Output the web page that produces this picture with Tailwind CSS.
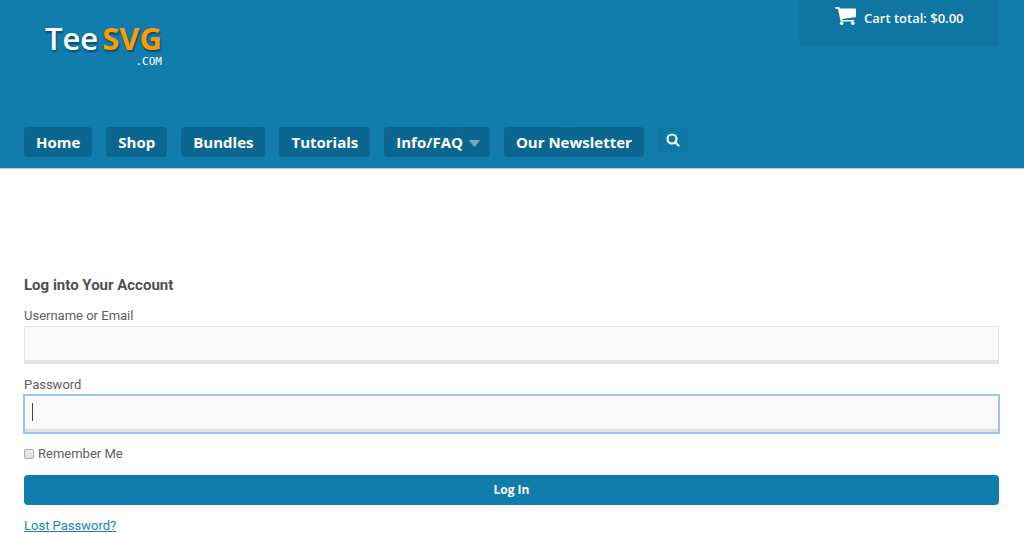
<!DOCTYPE html>
<html lang="en">
<head>
<meta charset="utf-8">
<meta name="viewport" content="width=device-width, initial-scale=1">
<title>TeeSVG.com – Log In</title>
<script src="https://cdn.jsdelivr.net/npm/@tailwindcss/browser@4"></script>
</head>
<body class="bg-white font-['Roboto',sans-serif] text-[13px] text-[#5e5e5e]">
<header class="border-b border-[#a9d3e6] bg-[#117dad] px-6 font-['Open_Sans',sans-serif] text-white">
  <div class="flex h-[113px] items-start justify-between">
    <a href="#" class="ml-[21px] mt-5 flex flex-col items-end" aria-label="TeeSVG.com">
      <span class="flex gap-1 text-[31px] font-bold leading-9 [text-shadow:1px_2px_2px_#0a4a6a]"><span class="font-semibold">Tee</span><span class="text-[#ff9a00]">SVG</span></span>
      <span class="font-['DejaVu_Sans_Mono',monospace] text-[11px] leading-3">.COM</span>
    </a>
    <a href="#" class="mr-px flex h-[46px] w-[200px] items-start gap-2 rounded-b bg-[#0f76a4] pl-9 pt-1.5 text-[13px] font-semibold leading-6">
      <svg class="mt-px h-[18px] w-[21px]" viewBox="0 0 21 18" fill="#fff" aria-hidden="true"><path d="M0 .9Q0 0 .9 0H3.600Q4.500 0 4.700.9L4.900 1.600H20.200Q21 1.600 21 2.400V9.400Q21 10.200 20.200 10.300L7 11.900L7.200 13H18.700Q19.500 13 19.500 13.800T18.700 14.600H5.700L2.900 1.800H.9Q0 1.800 0 .9Z"/><circle cx="6.700" cy="16.200" r="1.800"/><circle cx="17.800" cy="16.200" r="1.800"/></svg>
      <span>Cart total: $0.00</span>
    </a>
  </div>
  <nav class="mr-px flex h-[55px] items-start border-t border-[#0f78a6] pt-[13px] text-[15px] font-bold leading-[30px]">
    <ul class="flex gap-3.5">
      <li><a href="#" class="block rounded bg-[#0c6790] px-3">Home</a></li>
      <li><a href="#" class="block rounded bg-[#0c6790] px-3">Shop</a></li>
      <li><a href="#" class="block rounded bg-[#0c6790] px-3">Bundles</a></li>
      <li><a href="#" class="block rounded bg-[#0c6790] px-3">Tutorials</a></li>
      <li><a href="#" class="flex items-center gap-1.5 rounded bg-[#0c6790] pl-3 pr-2.5">Info/FAQ <svg class="mt-0.5 h-[7px] w-[11px]" viewBox="0 0 11 7" fill="#6fa9c4" aria-hidden="true"><path d="M1 0h9q1 0 .6 1L6.300 6.300q-.8.8-1.600 0L.4 1Q0 0 1 0Z"/></svg></a></li>
      <li><a href="#" class="block rounded bg-[#0c6790] px-3">Our Newsletter</a></li>
    </ul>
    <button type="button" aria-label="Search" class="ml-3.5 grid h-[25px] w-[30px] place-items-center rounded bg-[#0f78a6]">
      <svg class="h-[14px] w-[14px]" viewBox="0 0 14 14" fill="none" stroke="#fff" stroke-width="2.200" stroke-linecap="round" aria-hidden="true"><circle cx="6" cy="6" r="4.500"/><path d="M9.500 9.500l3 3"/></svg>
    </button>
  </nav>
</header>
<main class="pl-6 pr-[25px] pt-[106px]">
  <form>
    <h1 class="text-[15px] font-bold leading-5 text-[#505050]">Log into Your Account</h1>
    <label for="user" class="mt-[11px] block leading-5">Username or Email</label>
    <input id="user" type="text" class="block h-[38px] w-full border border-b-4 border-[#e3e3e3] bg-[#fafafa] px-2 outline-none">
    <label for="pass" class="mt-[11px] block leading-5">Password</label>
    <div class="relative">
      <input id="pass" type="password" class="block h-[38px] w-full border border-b-4 border-[#e3e3e3] bg-[#fafafa] px-2 caret-transparent outline-2 -outline-offset-1 outline-[#9fc1fa]">
      <span class="absolute left-2 top-2 h-[18px] w-px bg-[#444]" aria-hidden="true"></span>
    </div>
    <div class="mt-[11px] flex items-center gap-1 leading-5">
      <input id="remember" type="checkbox" class="h-2.5 w-2.5 appearance-none rounded-xs border border-[#aaa] bg-linear-to-b from-[#eee] to-[#ddd]">
      <label for="remember">Remember Me</label>
    </div>
    <button type="submit" class="mt-[11px] block h-[30px] w-full rounded bg-[#117dad] font-['Open_Sans',sans-serif] text-xs font-bold text-white">Log In</button>
    <p class="mt-[11px] leading-5"><a href="#" class="text-[#1c83b1] underline">Lost Password?</a></p>
  </form>
</main>
</body>
</html>
